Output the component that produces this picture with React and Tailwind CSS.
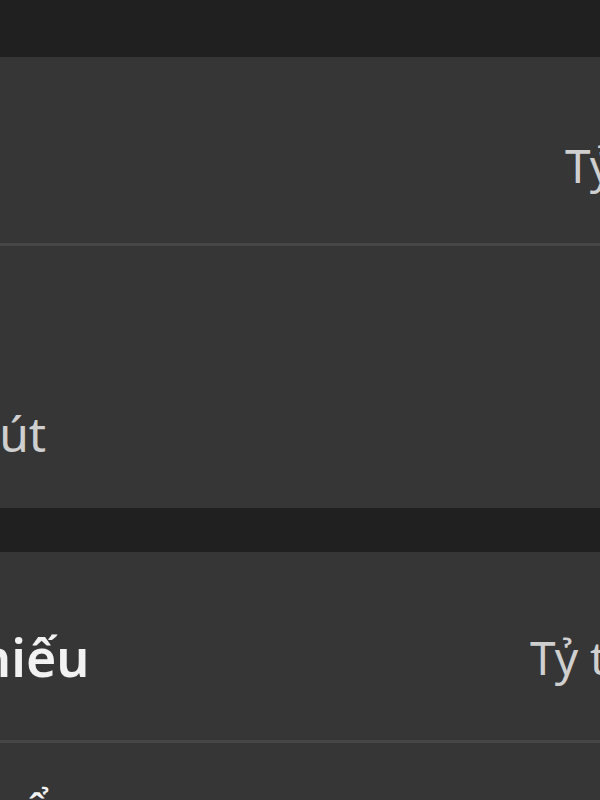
import React from 'react';

const font = { fontFamily: '"Noto Sans", "Open Sans", sans-serif' };

export default function App() {
  return (
    <div className="w-[600px] h-[800px] overflow-hidden bg-[#202020] whitespace-nowrap" style={font}>
      {/* top band */}
      <div className="h-[57px]" />

      {/* group 1 */}
      <div className="bg-[#363636]">
        <div className="h-[186px] flex items-center pt-[30px]">
          <span className="pl-[565px] text-[46px] leading-none text-[#cfcfcf]">Tỷ lệ</span>
        </div>
        <div className="h-[3px] bg-[#464646]" />
        <div className="h-[262px] flex items-end pb-[50px]">
          <span className="-ml-[60px] text-[48px] leading-none text-[#cfcfcf]">phút</span>
        </div>
      </div>

      {/* band */}
      <div className="h-[44px]" />

      {/* group 2 */}
      <div className="bg-[#363636]">
        <div className="h-[188px] flex items-center pt-[22px]">
          <span className="w-[530px] shrink-0 text-[52px] leading-none font-semibold text-[#f2f2f2]">
            <span className="inline-block -ml-[22px]">hiếu</span>
          </span>
          <span className="text-[46px] leading-none text-[#cfcfcf]">Tỷ trọng</span>
        </div>
        <div className="h-[3px] bg-[#464646]" />
        <div className="h-[80px] pt-[50px] pl-[22px]">
          <span className="text-[46px] leading-none font-medium text-[#f2f2f2]">Ẩm</span>
        </div>
      </div>
    </div>
  );
}
